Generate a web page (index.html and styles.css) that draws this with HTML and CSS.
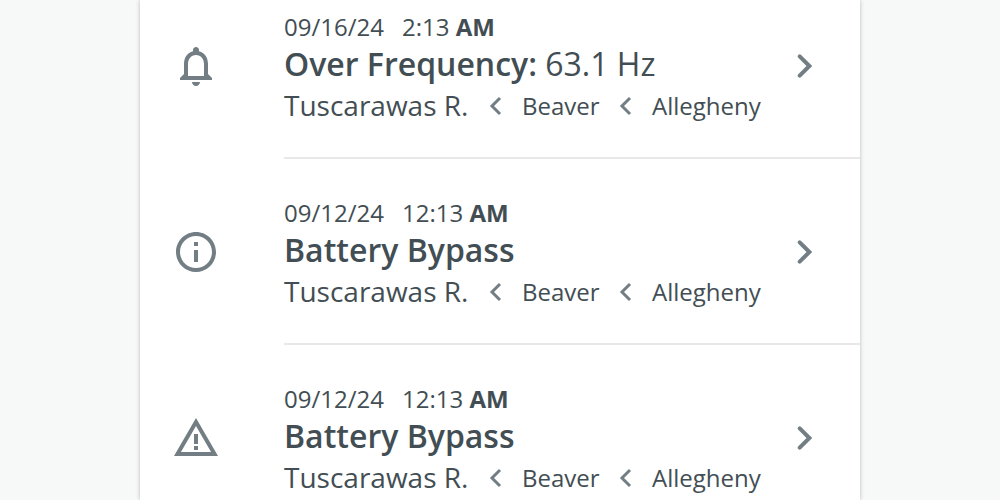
FILE: index.html
```html
<!DOCTYPE html>
<html lang="en">
<head>
<meta charset="utf-8">
<title>Events</title>
<link rel="stylesheet" href="styles.css">
</head>
<body>
<main class="list">
  <article class="row">
    <svg class="icon" viewBox="0 0 24 24"><path d="M12 22c1.1 0 2-.9 2-2h-4c0 1.1.9 2 2 2zm6-6v-5c0-3.07-1.63-5.64-4.5-6.32V4c0-.83-.67-1.5-1.5-1.5s-1.5.67-1.5 1.5v.68C7.64 5.36 6 7.92 6 11v5l-2 2v1h16v-1l-2-2zm-2 1H8v-6c0-2.48 1.51-4.5 4-4.5s4 2.02 4 4.5v6z"/></svg>
    <div class="body">
      <div class="text">
        <div class="stamp"><span>09/16/24</span><span class="time">2:13 <b>AM</b></span></div>
        <div class="title"><b>Over Frequency:</b> 63.1 Hz</div>
        <div class="path"><span class="site">Tuscarawas R.</span><svg class="sep" viewBox="0 0 14 20"><path d="m11 2-8 8 8 8"/></svg><span class="beaver">Beaver</span><svg class="sep" viewBox="0 0 14 20"><path d="m11 2-8 8 8 8"/></svg><span>Allegheny</span></div>
      </div>
      <svg class="chevron" viewBox="0 0 16 26"><path d="m3.7 3.3 9.7 9.7-9.7 9.7"/></svg>
    </div>
  </article>
  <article class="row">
    <svg class="icon" viewBox="0 0 24 24"><path d="M11 7h2v2h-2zm0 4h2v6h-2zm1-9C6.48 2 2 6.48 2 12s4.48 10 10 10 10-4.48 10-10S17.52 2 12 2zm0 18c-4.41 0-8-3.59-8-8s3.59-8 8-8 8 3.59 8 8-3.59 8-8 8z"/></svg>
    <div class="body">
      <div class="text">
        <div class="stamp"><span>09/12/24</span><span class="time">12:13 <b>AM</b></span></div>
        <div class="title"><b>Battery Bypass</b></div>
        <div class="path"><span class="site">Tuscarawas R.</span><svg class="sep" viewBox="0 0 14 20"><path d="m11 2-8 8 8 8"/></svg><span class="beaver">Beaver</span><svg class="sep" viewBox="0 0 14 20"><path d="m11 2-8 8 8 8"/></svg><span>Allegheny</span></div>
      </div>
      <svg class="chevron" viewBox="0 0 16 26"><path d="m3.7 3.3 9.7 9.7-9.7 9.7"/></svg>
    </div>
  </article>
  <article class="row">
    <svg class="icon" viewBox="0 0 24 24"><path d="M12 5.99 19.53 19H4.47L12 5.99M12 2 1 21h22L12 2zm1 14h-2v2h2v-2zm0-6h-2v5h2v-5z"/></svg>
    <div class="body">
      <div class="text">
        <div class="stamp"><span>09/12/24</span><span class="time">12:13 <b>AM</b></span></div>
        <div class="title"><b>Battery Bypass</b></div>
        <div class="path"><span class="site">Tuscarawas R.</span><svg class="sep" viewBox="0 0 14 20"><path d="m11 2-8 8 8 8"/></svg><span class="beaver">Beaver</span><svg class="sep" viewBox="0 0 14 20"><path d="m11 2-8 8 8 8"/></svg><span>Allegheny</span></div>
      </div>
      <svg class="chevron" viewBox="0 0 16 26"><path d="m3.7 3.3 9.7 9.7-9.7 9.7"/></svg>
    </div>
  </article>
</main>
</body>
</html>
```
FILE: styles.css
```css
* { box-sizing: border-box; }
body {
  margin: 0;
  height: 500px;
  overflow: hidden;
  background: #f7f9f8;
  color: #424e54;
  font-family: "Open Sans", "Noto Sans", sans-serif;
}
.list {
  width: 720px;
  height: 500px;
  margin: 0 auto;
  overflow: hidden;
  background: #fff;
  box-shadow: 0 0 4px rgba(0, 0, 0, 0.25);
}
.row {
  display: flex;
  height: 186px;
  padding-left: 32px;
}
.row:first-child { height: 159px; }
.row:last-child { height: 155px; }
.row:last-child .body { border-bottom: 0; }
.icon {
  width: 48px;
  height: 48px;
  margin-top: 69px;
  flex: none;
  fill: #727e84;
}
.row:first-child .icon { margin-top: 42px; }
.body {
  display: flex;
  flex: 1;
  margin-left: 64px;
  border-bottom: 2px solid #e8e8e8;
}
.text {
  width: 512px;
  padding-top: 38px;
  white-space: nowrap;
}
.row:first-child .text { padding-top: 11px; }
.stamp {
  display: flex;
  gap: 18px;
  font-size: 24px;
  line-height: 32px;
}
.stamp b { font-weight: 700; }
.title {
  font-size: 32px;
  line-height: 42px;
}
.title b { font-weight: 600; }
.path {
  display: flex;
  align-items: center;
  height: 38px;
  margin-top: 2px;
  font-size: 24px;
  line-height: 38px;
}
.site {
  width: 205px;
  margin-bottom: 2px;
  font-size: 28px;
}
.beaver { width: 97px; }
.sep {
  width: 14px;
  height: 20px;
  margin-right: 19px;
  fill: none;
  stroke: #727e84;
  stroke-width: 3;
}
.chevron {
  width: 16px;
  height: 26px;
  margin-top: 80px;
  fill: none;
  stroke: #727e84;
  stroke-width: 4;
  stroke-linecap: round;
}
.row:first-child .chevron { margin-top: 53px; }
```
